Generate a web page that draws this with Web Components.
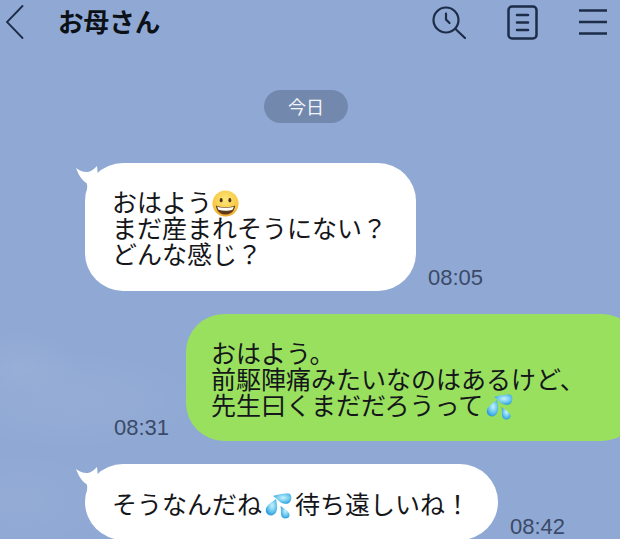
<!DOCTYPE html>
<html lang="ja">
<head>
<meta charset="utf-8">
<title>お母さん</title>
<style>
  html, body { margin: 0; height: 539px; overflow: hidden; }
  body { font-family: "Liberation Sans", "Noto Sans CJK JP", sans-serif; }
</style>
</head>
<body>
<talk-room>
  <talk-header slot="header" title="お母さん"></talk-header>
  <date-pill>今日</date-pill>
  <chat-bubble side="in" time="08:05" style="--top:40px;--w:331px;--h:128px;--pad:25px 0 0 27px">おはよう<emoji-grin></emoji-grin><br>まだ産まれそうにない？<br>どんな感じ？</chat-bubble>
  <chat-bubble side="out" time="08:31" style="--top:23px;--w:454px;--h:127px;--pad:25px 0 0 25px">おはよう。<br>前駆陣痛みたいなのはあるけど、<br>先生曰くまだだろうって<emoji-sweat></emoji-sweat></chat-bubble>
  <chat-bubble side="in" time="08:42" style="--top:23px;--w:413px;--h:76px;--pad:26px 0 0 27px">そうなんだね<emoji-sweat></emoji-sweat>待ち遠しいね！</chat-bubble>
</talk-room>
<script>
class TalkRoom extends HTMLElement {
  constructor() {
    super();
    this.attachShadow({ mode: 'open' });
    this.shadowRoot.innerHTML = `
      <style>
        :host {
          display: flex;
          flex-direction: column;
          position: relative;
          width: 620px;
          height: 539px;
          overflow: hidden;
          background:
            radial-gradient(ellipse 60px 34px at 20px 365px, rgba(255,255,255,.06), transparent),
            radial-gradient(ellipse 130px 50px at 70px 400px, rgba(255,255,255,.05), transparent),
            radial-gradient(ellipse 90px 50px at 20px 500px, rgba(255,255,255,.03), transparent),
            #90a9d4;
        }
      </style>
      <slot name="header"></slot>
      <slot></slot>
    `;
  }
}

class TalkHeader extends HTMLElement {
  constructor() {
    super();
    this.attachShadow({ mode: 'open' });
  }
  connectedCallback() {
    this.shadowRoot.innerHTML = `
      <style>
        :host {
          display: flex;
          flex: none;
          align-items: center;
          height: 48px;
          color: #0c1118;
        }
        .back { margin: 0 0 4px 5px; width: 20px; height: 34px; }
        .title {
          margin: 0 0 6px 33px;
          font: 700 25.600px/28px "Noto Sans CJK JP", sans-serif;
          flex: 1;
        }
        svg { display: block; fill: none; stroke: #1d2c47; stroke-linecap: round; }
        .icons { display: flex; align-items: center; gap: 41px; margin: 0 13px 4px 0; }
      </style>
      <svg class="back" viewBox="0 0 20 34" stroke-width="1.800"><path d="M17.500 1 2 17 17.500 33"/></svg>
      <div class="title">${this.getAttribute('title')}</div>
      <div class="icons">
        <svg width="34" height="33" viewBox="0 0 34 33" stroke-width="2.200">
          <circle cx="14" cy="14" r="12.500"/>
          <path d="M14 7.500v6l3.500 3.500M23.500 23 33 32"/>
        </svg>
        <svg width="31" height="35" viewBox="0 0 31 35" stroke-width="2.500">
          <rect x="1.500" y="1.500" width="28" height="32" rx="3.500"/>
          <path d="M10 10h11M10 17.500h11M10 25h11"/>
        </svg>
        <svg width="28" height="26" viewBox="0 0 28 26" stroke-width="2.400">
          <path d="M0 1.500h28M0 13h28M0 24.500h28" stroke-linecap="butt"/>
        </svg>
      </div>
    `;
  }
}

class DatePill extends HTMLElement {
  constructor() {
    super();
    this.attachShadow({ mode: 'open' });
    this.shadowRoot.innerHTML = `
      <style>
        :host {
          display: flex;
          flex: none;
          align-self: flex-start;
          align-items: center;
          justify-content: center;
          box-sizing: border-box;
          margin: 42px 0 0 264px;
          width: 84px;
          height: 33px;
          border-radius: 17px;
          background: #7288ad;
          color: #f2f5fa;
          font: 18px/33px "Noto Sans CJK JP", sans-serif;
        }
      </style>
      <slot></slot>
    `;
  }
}

class ChatBubble extends HTMLElement {
  constructor() {
    super();
    this.attachShadow({ mode: 'open' });
  }
  connectedCallback() {
    const side = this.getAttribute('side');
    this.shadowRoot.innerHTML = `
      <style>
        :host {
          display: flex;
          flex: none;
          align-items: flex-end;
          gap: 12px;
          margin-top: var(--top);
          color: #14161a;
        }
        :host([side="in"]) { padding-left: 85px; }
        :host([side="out"]) { flex-direction: row-reverse; gap: 17px; }
        .bubble {
          position: relative;
          flex: none;
          box-sizing: border-box;
          width: var(--w);
          height: var(--h);
          padding: var(--pad);
          border-radius: 38px;
          background: #fff;
          font: 25px/26px "Noto Sans CJK JP", sans-serif;
          white-space: nowrap;
        }
        :host([side="out"]) .bubble { background: #99e05f; margin-right: -20px; }
        .tail { position: absolute; left: -10px; top: 3px; width: 30px; height: 26px; fill: #fff; }
        .time {
          flex: none;
          margin-bottom: 1px;
          color: #3a4a68;
          font: 22px/24px "Liberation Sans", sans-serif;
        }
      </style>
      <div class="bubble">
        ${side === 'in' ? '<svg class="tail" viewBox="0 0 30 26"><path d="M1 2C5 5 9 6.500 13 6 16 5.500 19 3 22 0L24 22 12 24C12.500 21 12.300 19 11.500 17 6 14 3 7 1 2Z"/></svg>' : ''}
        <slot></slot>
      </div>
      <div class="time">${this.getAttribute('time')}</div>
    `;
  }
}

class EmojiGrin extends HTMLElement {
  constructor() {
    super();
    this.attachShadow({ mode: 'open' });
    this.shadowRoot.innerHTML = `
      <style>
        :host { display: inline-block; width: 27px; height: 27px; margin: -6px 0; vertical-align: 1px; }
        svg { display: block; }
      </style>
      <svg width="27" height="27" viewBox="0 0 28 28">
        <defs><radialGradient id="f" cx=".5" cy=".35" r=".7"><stop offset="0" stop-color="#fde77a"/><stop offset=".7" stop-color="#f8c743"/><stop offset="1" stop-color="#e99a2a"/></radialGradient></defs>
        <circle cx="14" cy="14" r="13.500" fill="url(#f)"/>
        <ellipse cx="9.500" cy="10.500" rx="1.500" ry="2.300" fill="#4b3318"/>
        <ellipse cx="18.500" cy="10.500" rx="1.500" ry="2.300" fill="#4b3318"/>
        <path d="M4 16C9 18.500 19 18.500 24 16 23.500 22 19 25.500 14 25.500S4.500 22 4 16Z" fill="#5c3a17"/>
        <path d="M5.500 17C10 19 18 19 22.500 17 22.300 18.500 21.900 19.500 21.300 20.500 17 22 11 22 6.700 20.500 6.100 19.500 5.700 18.500 5.500 17Z" fill="#fff"/>
      </svg>
    `;
  }
}

class EmojiSweat extends HTMLElement {
  constructor() {
    super();
    this.attachShadow({ mode: 'open' });
    this.shadowRoot.innerHTML = `
      <style>
        :host { display: inline-block; width: 27px; height: 26px; margin: -6px 3px -6px 3px; vertical-align: 1px; }
        svg { display: block; }
      </style>
      <svg width="27" height="26" viewBox="0 0 27 26">
        <defs><radialGradient id="d" cx=".55" cy=".4" r=".65"><stop offset="0" stop-color="#c8f2fb"/><stop offset=".55" stop-color="#6cc8ef"/><stop offset="1" stop-color="#1f94da"/></radialGradient></defs>
        <path d="M8 3C14 1 22 0 25 1 27 3 27 8 24 10 20 12 16 10 14 8 12 6 10 4 8 3Z" fill="url(#d)"/>
        <path d="M11 6C11.500 10 13 13 11.500 18 10 23 4 24 1.500 20-.5 16 1.500 12 11 6Z" fill="url(#d)"/>
        <path d="M15.500 13C18 15 24 18 24.500 21.500 25 25 20 27 17.500 24.500 15 22 16.500 17 15.500 13Z" fill="url(#d)"/>
      </svg>
    `;
  }
}

customElements.define('talk-room', TalkRoom);
customElements.define('talk-header', TalkHeader);
customElements.define('date-pill', DatePill);
customElements.define('chat-bubble', ChatBubble);
customElements.define('emoji-grin', EmojiGrin);
customElements.define('emoji-sweat', EmojiSweat);
</script>
</body>
</html>
